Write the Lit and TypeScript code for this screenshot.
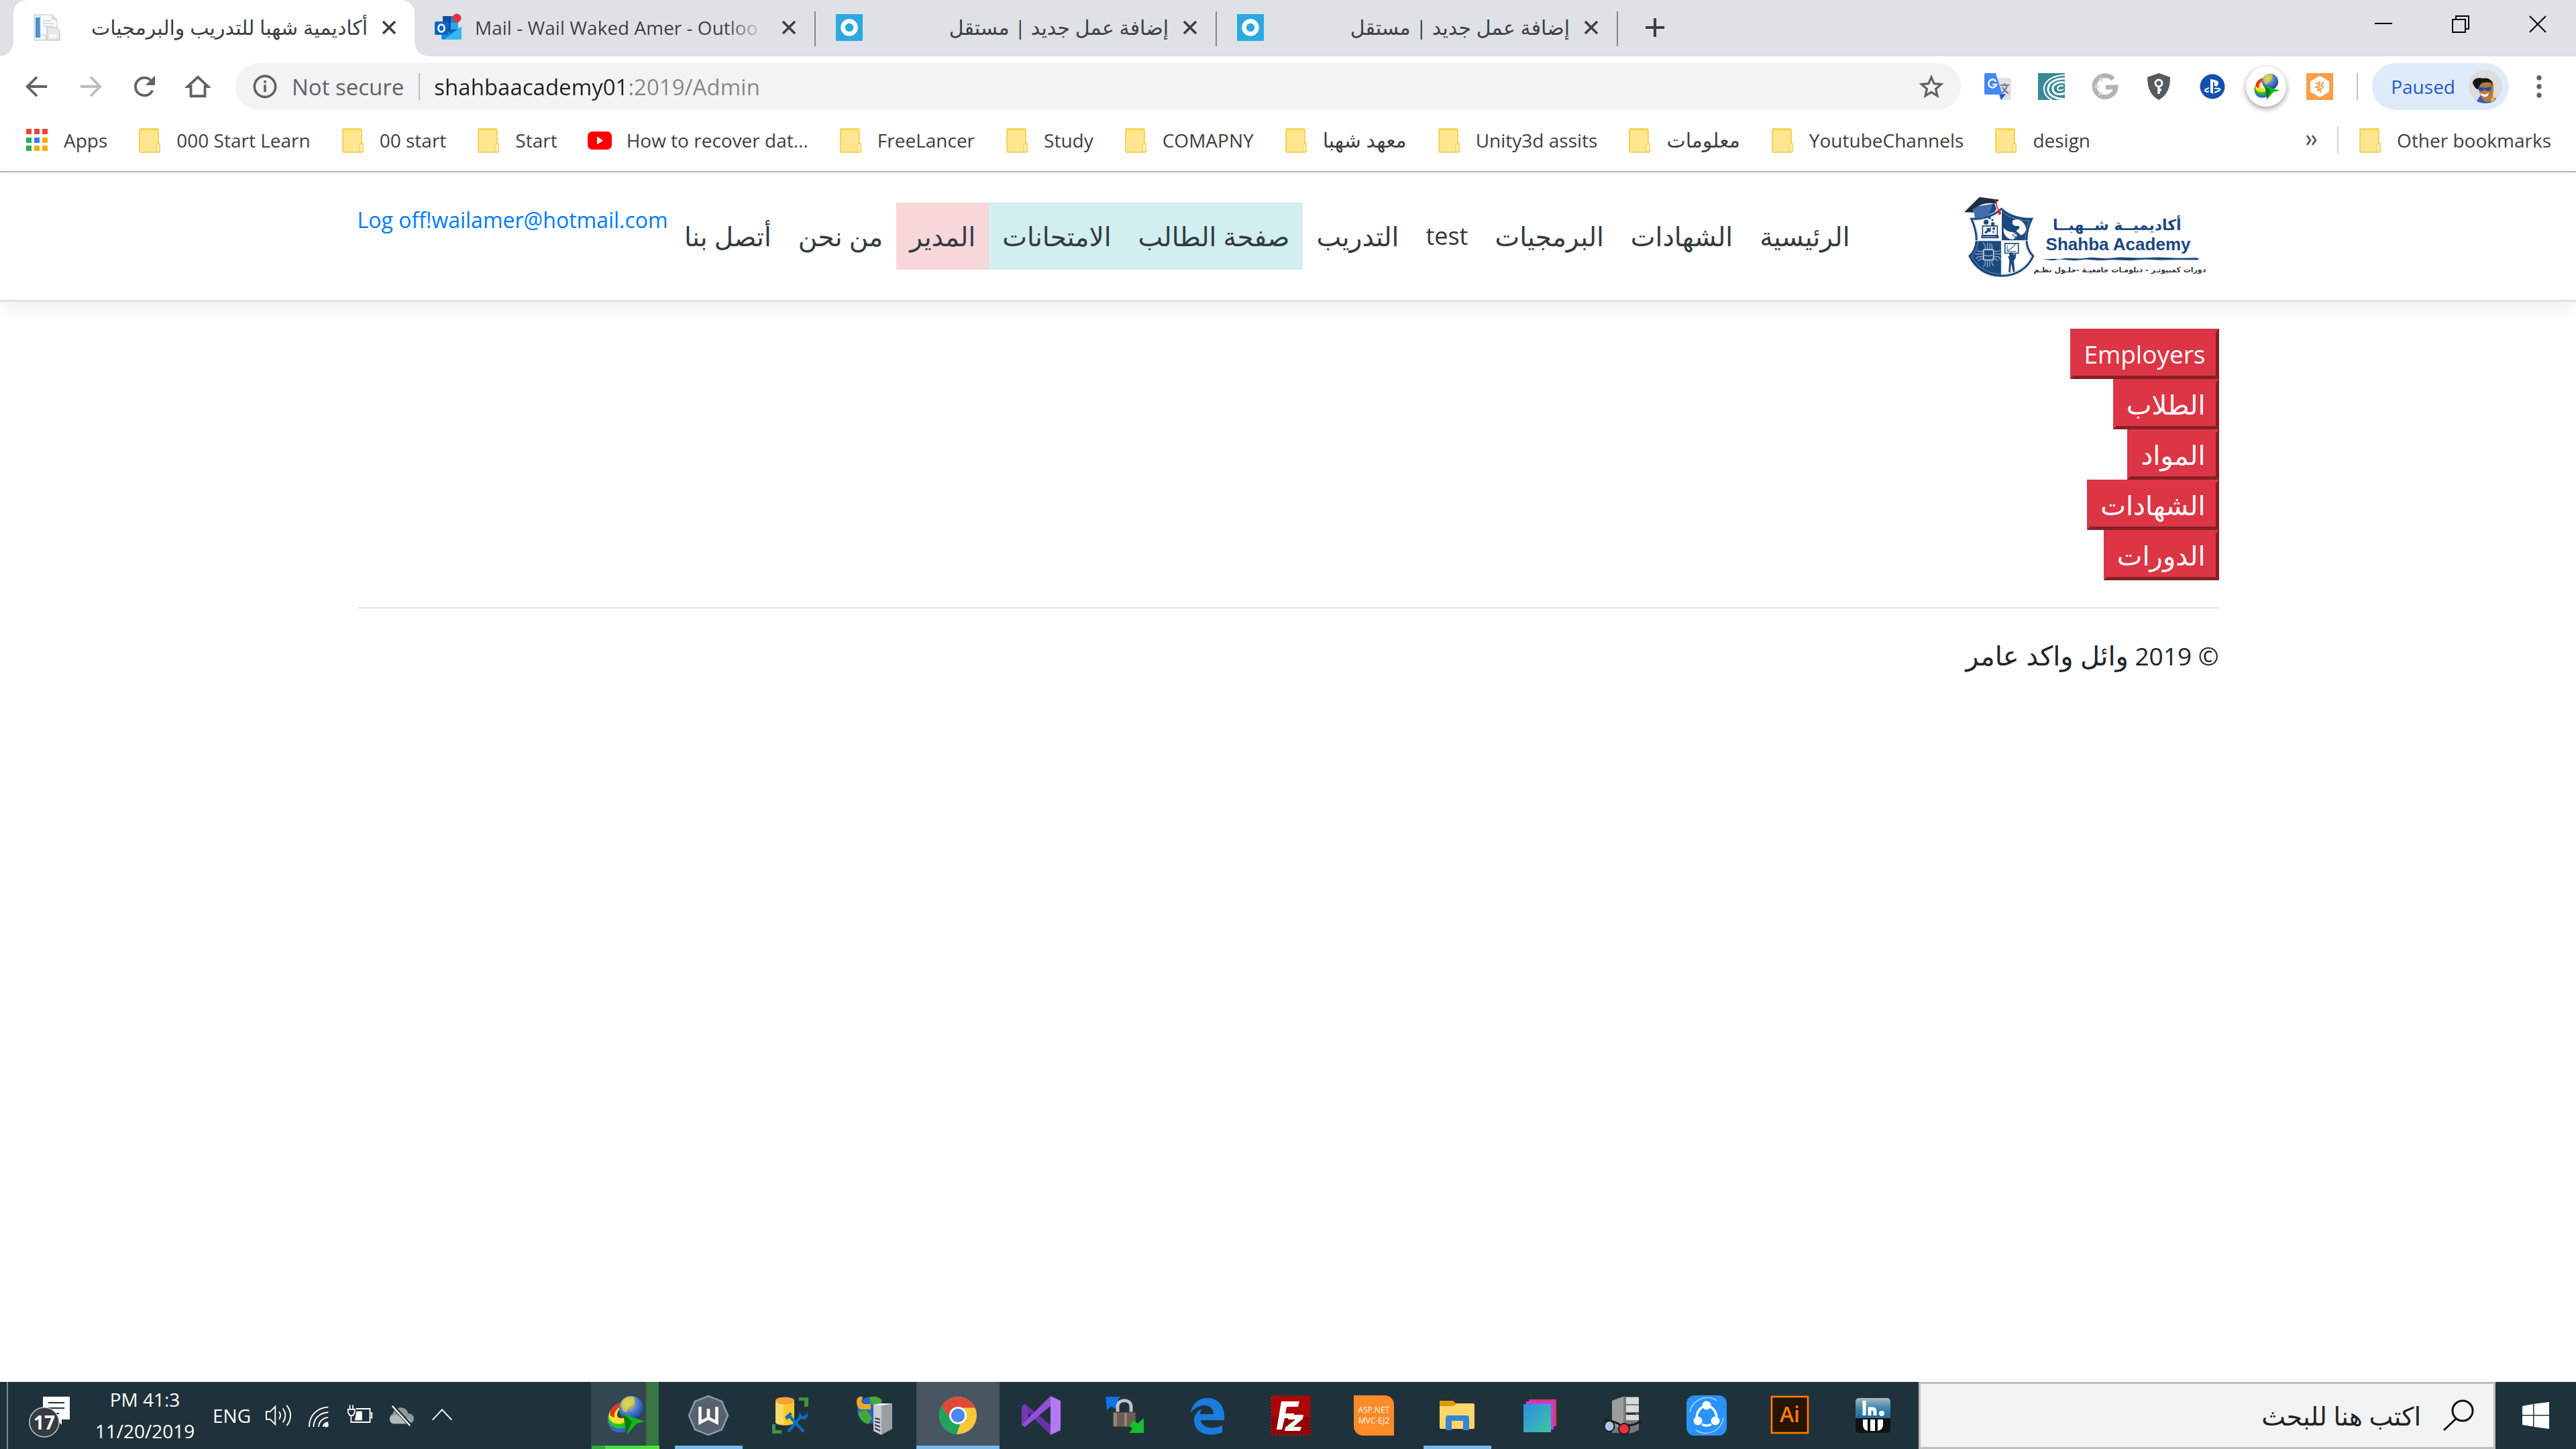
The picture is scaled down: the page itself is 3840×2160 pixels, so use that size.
import { LitElement, html, svg, css } from "lit";
import { customElement, property } from "lit/decorators.js";
import { classMap } from "lit/directives/class-map.js";

/* ---------- icon library ---------- */

const icon = (box: string, body: unknown) =>
  html`<svg class="icon" viewBox=${box} aria-hidden="true">${body}</svg>`;

const idm = (id: string) => svg`
  <defs>
    <radialGradient id=${id} cx=".35" cy=".3" r=".8"><stop offset="0" stop-color="#fff6b0"/><stop offset=".25" stop-color="#b8b858"/><stop offset=".5" stop-color="#4a80dc"/><stop offset="1" stop-color="#16377c"/></radialGradient>
  </defs>
  <path d="M22 14C6 20 0 34 6 46c6 12 24 12 32 2l-8-8c-8 6-16 0-15-8 1-6 4-10 9-12z" fill="#3a62d8"/>
  <path d="M22 13C7 18 1 31 6 41c6 11 23 11 31 1l-7-5c-8 5-15 0-14-6 1-6 4-9 8-12z" fill="#25c41f"/>
  <path d="M22 12C9 16 3 27 7 36c5 9 20 8 27 1l-5-4c-6 3-12 0-11-5 1-5 3-8 6-10z" fill="#f4e22d"/>
  <path d="M22 11C11 14 5 23 8 31l6 2c-1-8 3-13 9-16z" fill="#e2372a"/>
  <circle cx="39" cy="19" r="18" fill="url(#${id})"/>
  <path d="M26 9c5-7 12-8 18-6-2 4 2 6-1 10-4 4-8 2-9 8-1 4-5 5-7 2-2-4-3-9-1-14z" fill="#d8cf4a" opacity=".8"/>
  <path d="M27 28l33 11-13 3-15 17 0-14z" fill="#0fb91a"/>
  <path d="M27 28l5 31 8-20z" fill="#087a12"/>`;

const ICONS: Record<string, unknown> = {
  page: icon("0 0 40 40", svg`
    <rect x="1" y="1" width="18" height="38" fill="#eef2f6" stroke="#b9c2cc"/><rect x="3" y="5" width="7" height="30" fill="#4a90d2"/>
    <path d="M10 1h18l7 7v23H10z" fill="#f7f8f9" stroke="#c6cbd1"/><path d="M28 1v7h7" fill="#dfe3e7" stroke="#c6cbd1"/>
    <path d="M14 10h12M14 14h16M14 18h16" stroke="#d2d6db" stroke-width="1.5"/>
    <path d="M20 20h14l5 5v14H20z" fill="#e6e8ea" stroke="#b4bac1"/><path d="M24 30h10v5H24z" fill="#fff"/>`),
  outlook: icon("0 0 40 40", svg`
    <path d="M12 3h20a3 3 0 0 1 3 3v26H12z" fill="#0a5bb0"/><path d="M12 3h12v10H12z" fill="#0f4c9c"/><path d="M24 13h11v10H24z" fill="#28a8ea"/><path d="M24 3h11v10H24z" fill="#1480d8"/>
    <path d="M10 20l14 8 16-9v16a3 3 0 0 1-3 3H12a2 2 0 0 1-2-2z" fill="#1a86dc"/><path d="M40 19L14 38h23a3 3 0 0 0 3-3z" fill="#35b8f1"/>
    <rect x="0" y="11" width="20" height="20" rx="2" fill="#0f66c2"/><ellipse cx="10" cy="21" rx="4.6" ry="5.4" fill="none" stroke="#fff" stroke-width="2.6"/>
    <circle cx="33" cy="6" r="6.5" fill="#e0323c"/>`),
  ring: icon("0 0 40 40", svg`<path d="M0 0h40v40H0z" fill="#2ca9e1"/><circle cx="20" cy="20" r="9.5" fill="none" stroke="#fff" stroke-width="6.5"/>`),
  close: icon("0 0 24 24", svg`<path d="M3 3l18 18M21 3L3 21" stroke="#3c4043" stroke-width="3.6" fill="none"/>`),
  plus: icon("0 0 32 32", svg`<path d="M16 1v30M1 16h30" stroke="#3c4043" stroke-width="4.4"/>`),
  minimize: icon("0 0 26 26", svg`<path d="M0 12h26" stroke="#000" stroke-width="2"/>`),
  restore: icon("0 0 26 26", svg`<path d="M1 6h19v19H1zM6 6V1h19v19h-5" stroke="#000" stroke-width="2" fill="none"/>`),
  quit: icon("0 0 26 26", svg`<path d="M1 1l24 24M25 1L1 25" stroke="#000" stroke-width="2"/>`),
  back: icon("0 0 40 40", svg`<path d="M36 20H6M20 5L5 20l15 15" stroke="#5f6368" stroke-width="4" fill="none"/>`),
  forward: icon("0 0 40 40", svg`<path d="M4 20h30M20 5l15 15-15 15" stroke="#babcbe" stroke-width="4" fill="none"/>`),
  reload: icon("0 0 40 40", svg`<path d="M33 26a14 14 0 1 1-3-16" stroke="#5f6368" stroke-width="4" fill="none"/><path d="M37 3v15H22z" fill="#5f6368"/>`),
  home: icon("0 0 40 40", svg`<path d="M4 20L20 5l16 15h-5v15H9V20z" stroke="#5f6368" stroke-width="4" fill="none"/>`),
  info: icon("0 0 34 34", svg`<circle cx="17" cy="17" r="14.8" stroke="#5f6368" stroke-width="3.4" fill="none"/><path d="M17 14.5v10M17 8.500v3.500" stroke="#5f6368" stroke-width="3.4"/>`),
  star: icon("0 0 36 36", svg`<path d="M18 4l4.100 9.700 10.500.9-8 6.900 2.400 10.300-9-5.500-9 5.500 2.400-10.300-8-6.900 10.500-.9z" stroke="#5f6368" stroke-width="3.200" fill="none"/>`),
  translate: icon("0 0 40 40", svg`
    <path d="M16 7h22a2 2 0 0 1 2 2v29a2 2 0 0 1-2 2H24z" fill="#dfe1e5"/><path d="M22 31h10l-7 9z" fill="#2c56b4"/>
    <path d="M24 18h13M30.500 15v3M34 18c-1 6-5 10-9 12M27 21c2 4 5 7 9 9" stroke="#6b7480" stroke-width="2" fill="none"/>
    <path d="M2 0h15l10 32H2a2 2 0 0 1-2-2V2a2 2 0 0 1 2-2z" fill="#4688f1"/>
    <path d="M17.500 12.500a6 6 0 1 0 .6 4.500h-5.600" stroke="#fff" stroke-width="2.400" fill="none"/>`),
  swirl: icon("0 0 40 40", svg`
    <path d="M0 0h40v40H0z" fill="#38899b"/>
    <path d="M40 3C22 3 9 12 9 23c0 8 5 14 12 17" stroke="#fff" stroke-width="2" fill="none"/>
    <path d="M40 8C26 8 15 14 15 24c0 8 8 14 25 15" stroke="#fff" stroke-width="3" fill="none"/>
    <path d="M40 14c-10-2-19 3-18 10 1 8 11 9 18 6" stroke="#fff" stroke-width="3" fill="none"/>
    <path d="M38 19c-6-1-9 1-9 4 1 4 6 3 9 1" stroke="#fff" stroke-width="2" fill="none"/>`),
  google: icon("0 0 40 40", svg`<path d="M32 9a16 16 0 1 0 4 12H21" stroke="#b4b4b4" stroke-width="7" fill="none"/><path d="M12 7l4 6M4 20h7M11 33l4-5" stroke="#d8d8d8" stroke-width="3"/>`),
  shield: icon("0 0 40 40", svg`<path d="M20 0l17 6c0 17-5 27-17 34C8 33 3 23 3 6z" fill="#555a5e"/><circle cx="20" cy="15" r="5" stroke="#fff" stroke-width="3" fill="none"/><path d="M20 20v11M20 25h4" stroke="#fff" stroke-width="3.500"/>`),
  ps: icon("0 0 40 40", svg`<circle cx="20" cy="20" r="18.500" fill="#1250b0"/><path d="M17 9v20l4 2V13c2 0 2 2 2 6 4 2 6-1 6-4 0-4-5-5-12-6z" fill="#fff"/><path d="M15 22c-5 2-9 4-3 6l3-1M23 23c8-1 10 1 7 3l-7 3" stroke="#fff" stroke-width="2" fill="none"/>`),
  idmsmall: icon("0 0 60 60", idm("globe-a")),
  honey: icon("0 0 40 40", svg`<path d="M0 0h40v40H0z" fill="#fb9e46"/><path d="M20 4l14 8v16l-14 8-14-8V12z" fill="#fff"/><path d="M14 14l5 3 1-5M26 13l-4 5 4 3M13 21l6-1-2 7M24 22l-4 3 2 4" stroke="#f6a24f" stroke-width="2.400" fill="none"/>`),
  avatar: icon("0 0 50 50", svg`
    <circle cx="25" cy="25" r="25" fill="#dcdcdc"/>
    <path d="M12 47l5-8h16l8 4-3 4c-8 4-18 4-26 0z" fill="#2e60c0"/><path d="M32 38l5 0 2 8-6 2z" fill="#f2bd28"/>
    <path d="M15 18c2-3 18-4 21 0 2 9 2 28-8 30-9 0-14-16-13-30z" fill="#b6793c"/><path d="M17 34c5 4 10 3 13 0 0 7-9 10-13 0z" fill="#fff"/>
    <path d="M6 20c0-7 8-9 16-7 7-2 15 3 13 11l-2-5c-6-1-11-1-15 2l-4 8c-2 1-6-4-8-9z" fill="#15161a"/>
    <path d="M14 26h7l4 1 9-2-1 6-6 1-3-3-4 3-5-1z" fill="#2848b4"/>`),
  dots: icon("0 0 8 34", svg`<circle cx="4" cy="4" r="3.700" fill="#5f6368"/><circle cx="4" cy="17" r="3.700" fill="#5f6368"/><circle cx="4" cy="30" r="3.700" fill="#5f6368"/>`),
  apps: icon("0 0 40 40", svg`
    <path d="M4 3h8v8H4zM16 3h8v8h-8zM28 3h8v8h-8z" fill="#ea4335"/><path d="M4 16h8v8H4zM4 28h8v8H4z" fill="#34a853"/>
    <path d="M16 16h8v8h-8z" fill="#2a84f0"/><path d="M28 16h8v8h-8zM16 28h8v8h-8zM28 28h8v8h-8z" fill="#f9ab00"/>`),
  folder: icon("0 0 40 40", svg`<path d="M6 3h25a2 2 0 0 1 2 2v20h2v12a1 1 0 0 1-1 1H6a1 1 0 0 1-1-1V4z" fill="#ffe68f" stroke="#f2cb4c" stroke-width="1.600"/><path d="M6 3h26v2H6z" fill="#fbd342"/><path d="M30 37V27l3-2h2v12z" fill="#fff0b8" stroke="#f2cb4c"/>`),
  youtube: icon("0 0 40 40", svg`<rect x="2" y="7" width="36" height="27" rx="7" fill="#f00"/><path d="M16 14.500v12l9-6z" fill="#fff"/>`),
  more: icon("0 0 20 20", svg`<path d="M3 3l5 7-5 7M11 3l5 7-5 7" stroke="#4a4e52" stroke-width="2.600" fill="none"/>`),

  notify: icon("0 0 64 64", svg`
    <path d="M22 4h40v34H50v8l-8-8H22z" fill="#fff"/><path d="M30 13h24M30 21h24M30 29h16" stroke="#1f323b" stroke-width="2"/>
    <circle cx="24" cy="42" r="22" fill="#353b42" stroke="#c8cccf" stroke-width="1.500"/>`),
  speaker: icon("0 0 42 40", svg`<path d="M2 14h6l8-8v28l-8-8H2zM22 14c3 4 3 8 0 12M28 9c5 7 5 15 0 22M34 4c8 10 8 22 0 32" stroke="#fff" stroke-width="2" fill="none"/>`),
  wifi: icon("0 0 36 40", svg`<path d="M2 38C2 20 14 8 32 7M9 38c0-13 9-22 23-23M17 38c0-8 6-14 15-15M24 38c0-4 3-7 8-7" stroke="#fff" stroke-width="2" fill="none"/><circle cx="29" cy="35" r="3.500" fill="#fff"/>`),
  battery: icon("0 0 44 40", svg`<path d="M15 9h23v22H14M38 16h3v8h-3" stroke="#fff" stroke-width="2" fill="none"/><path d="M16 13h9v15H13z" fill="#fff"/><path d="M5 3v7M10 3v7M2 10h11v5l-3 5H5l-3-5zM7 20v11h7" stroke="#fff" stroke-width="2" fill="#1f323b"/>`),
  cloud: icon("0 0 42 40", svg`<path d="M8 33a9 9 0 0 1 0-16c2-12 22-13 24 0a8 8 0 0 1 2 16z" fill="#8d979d"/><path d="M4 22c8-5 14-3 18 2 5-2 10 0 14 3a8 8 0 0 1-4 6H8a8 8 0 0 1-4-11z" fill="#b4babd"/><path d="M8 5l28 31" stroke="#1f323b" stroke-width="6"/><path d="M7 5l28 31" stroke="#fff" stroke-width="2.400"/>`),
  chevron: icon("0 0 36 40", svg`<path d="M3 27l15-16 15 16" stroke="#fff" stroke-width="2" fill="none"/>`),

  idm: icon("0 0 60 60", idm("globe-b")),
  warp: icon("0 0 60 60", svg`<path d="M30 1l20 8 9 21-9 21-20 8-20-8L1 30l9-21z" fill="#57626d" stroke="#8aa0bb" stroke-width="2.400"/><path d="M17.500 17v23.500L30 34l12.500 6.500V17M30 20v16" stroke="#fff" stroke-width="4.600" fill="none"/>`),
  dbtools: icon("0 0 60 60", svg`
    <path d="M6 8h28v33c-4 5-24 5-28 0z" fill="#fbc927"/><path d="M6 8h12v35c-6 0-11-1-12-3z" fill="#fbda6c"/><ellipse cx="20" cy="8" rx="14" ry="5.500" fill="#f2a33c"/>
    <path d="M41 3h14v14h-6V8h-8zM1 43v14h14v-5H6v-9z" fill="#3f9542"/>
    <path d="M25 54l20-24M48 54L25 29" stroke="#0e6cc0" stroke-width="4.600"/><path d="M20 32l8-7 3 3-8 9zM42 25l4 6 6-2 2-4c2 7-3 13-9 10l-4-4z" fill="#0e6cc0"/>`),
  globeserver: icon("0 0 60 60", svg`
    <circle cx="24" cy="22" r="20" fill="#2064c8"/><path d="M22 3c8-3 16 0 19 5l-8 8-9-3zM6 24l12-2 8 12-6 9C10 40 5 32 6 24z" fill="#45a83a"/>
    <path d="M3 9c0-6 6-9 9-6l-2 7 4 3h10v8H8c-4-3-5-8-5-12z" fill="#f5a623"/>
    <path d="M28 14l12-2v47l-12-6z" fill="#c9cccf"/><path d="M40 12h16v38l-16 9z" fill="#9b9fa3"/><path d="M28 14l10-2h18l-14 3z" fill="#f3f4f5"/>
    <path d="M30 34l8 2M30 39l8 2M30 44l8 3M30 49l8 4" stroke="#34383c" stroke-width="2"/>`),
  chrome: icon("0 0 60 60", svg`
    <circle cx="30" cy="30" r="28" fill="#f9c73a"/>
    <path d="M30 2a28 28 0 0 1 25.600 16.500H30L18.500 36.500 5.800 16A28 28 0 0 1 30 2z" fill="#e0493a"/>
    <path d="M5.800 16l13.400 20.800L33 43.500 28 58A28 28 0 0 1 5.800 16z" fill="#1fa45c"/>
    <circle cx="30" cy="30" r="13" fill="#fff"/><circle cx="30" cy="30" r="10.200" fill="#4a86f0"/>`),
  vs: icon("0 0 60 60", svg`
    <path d="M1 16l5-3 38 31v15L2 17z" fill="#6a32a8"/><path d="M1 16v28l5 3 5-5V19l-5-6z" fill="#7438b4"/><path d="M44 1v15L6 47l-5-3z" fill="#9250d8"/>
    <path d="M44 1l15 7v44l-15 7z" fill="#b27af0"/>`),
  lock: icon("0 0 60 60", svg`
    <path d="M2 2h22l-4 6 3 5-7 7-5-4-7 6z" fill="#0c74ee"/><path d="M20 28V16c1-11 19-11 20 0v12" stroke="#bfc2c4" stroke-width="5" fill="none"/>
    <rect x="13" y="25" width="34" height="22" rx="1" fill="#6b5f54" stroke="#3c3833"/><path d="M14 26h5v20h-5zM30 26h4v20h-4z" fill="#91867a"/>
    <path d="M59 34v22H37l5-6-4-5 6-8 6 5z" fill="#18bf2a"/>`),
  edge: icon("0 0 60 60", svg`<path d="M5 26C7 11 18 4 30 4c16 0 25 11 25 28v5H20c1 11 17 15 32 8v10c-20 9-42 1-42-18 0-8 5-14 12-17-2 2-3 5-3 8h20c0-16-22-18-34-2z" fill="#1a7cdc"/>`),
  filezilla: icon("0 0 60 60", svg`
    <path d="M2 2h56v56H2z" fill="#ae0606" stroke="#ae0606" stroke-width="4" stroke-dasharray="3 2"/><path d="M2 32h56v26H2z" fill="#920404"/>
    <path d="M9 51l7-42h27l-2 8H24l-2 10h13l-1 7H21l-4 17z" fill="#fff"/><path d="M27 29h22l-1 6-14 12h12l-2 6H21l1-5 15-12H26z" fill="#fff"/>`),
  asp: icon("0 0 60 60", svg`<path d="M0 0h46a14 14 0 0 1 14 14v46H14A14 14 0 0 1 0 46z" fill="#ff8a28"/><text x="30" y="26" text-anchor="middle" font-size="12" fill="#fff">ASP.NET</text><text x="30" y="42" text-anchor="middle" font-size="12" fill="#fff">MVC-EJ2</text>`),
  explorer: icon("0 0 60 60", svg`<path d="M4 8h20l5 5-4 6H4z" fill="#dd9800"/><path d="M4 16h21l4-4h25a2 2 0 0 1 2 2v34a2 2 0 0 1-2 2H6a2 2 0 0 1-2-2z" fill="#fbd76b"/><path d="M13 52V34a4 4 0 0 1 4-4h27a4 4 0 0 1 4 4v18h-9V38H22v14z" fill="#3486d2"/>`),
  stack: icon("0 0 60 60", svg`
    <defs><linearGradient id="sheet" x1="0" y1="0" x2="1" y2="1"><stop offset="0" stop-color="#2f8ae4"/><stop offset="1" stop-color="#3cc8a0"/></linearGradient></defs>
    <path d="M13 6h41v40H13z" fill="#d83a68"/><path d="M9 9h41v42H9z" fill="#c43ce0"/><path d="M5 13h41v42H5z" fill="url(#sheet)"/>`),
  serverglass: icon("0 0 60 60", svg`
    <path d="M13 8l16-6h24v50l-10 4H13z" fill="#77797b"/><path d="M13 8l17-6v44l-17 2z" fill="#9a9c9e"/>
    <path d="M34 3h19v10H34zM34 15h19v10H34zM34 29h19v8H34z" fill="#d8dadb"/><path d="M34 26h19v3H34z" fill="#2d302d"/><path d="M48 27h4v1h-4z" fill="#4be04a"/>
    <path d="M2 36c10 3 18 3 24 9l8-1c10 2 16-2 22-6" stroke="#1b1b1b" stroke-width="3" fill="none"/>
    <ellipse cx="9" cy="46" rx="7.500" ry="8" fill="#a9c2ec" stroke="#1b1b1b" stroke-width="2"/><ellipse cx="31" cy="50" rx="8" ry="8" fill="#ee3038" stroke="#1b1b1b" stroke-width="2"/>`),
  shareit: icon("0 0 60 60", svg`
    <rect width="60" height="60" rx="12" fill="#2a92fb"/><path d="M5 25C9 5 32-2 45 8M55 33C52 54 30 62 14 52" stroke="#a4d2ff" stroke-width="1.600" fill="none"/>
    <path d="M24 17c-7 5-9 10-9 17M36 17c7 5 9 10 9 17M23 43c5 3 9 3 14 0" stroke="#fff" stroke-width="3.400" fill="none"/>
    <circle cx="30" cy="15" r="6.500" fill="#fff"/><circle cx="17" cy="38" r="6.500" fill="#fff"/><circle cx="43" cy="38" r="6.500" fill="#fff"/>`),
  ai: icon("0 0 60 60", svg`<rect x="3" y="2" width="54" height="54" fill="#261300" stroke="#ff7c00" stroke-width="2.600"/><text x="30" y="40" text-anchor="middle" font-size="32" font-weight="600" fill="#ff7c00">Ai</text>`),
  hwi: icon("0 0 60 60", svg`
    <defs><linearGradient id="sky" x1="0" y1="0" x2="0" y2="1"><stop offset="0" stop-color="#a9bac4"/><stop offset=".5" stop-color="#3f86aa"/><stop offset="1" stop-color="#1e6a98"/></linearGradient></defs>
    <rect x="4" y="4" width="52" height="52" rx="5" fill="#111"/><path d="M4 34V9a5 5 0 0 1 5-5h42a5 5 0 0 1 5 5v25z" fill="url(#sky)"/>
    <path d="M17 8v22M25 30V20h4q4 0 4 4v6" stroke="#fff" stroke-width="5" fill="none"/><circle cx="43" cy="27" r="4" fill="#fff"/>
    <path d="M15 36h7v17q-7-2-7-9zM26 36h7v17h-7zM37 36h8v8q0 7-8 9z" fill="#fff"/>`),
  search: icon("0 0 48 48", svg`<circle cx="30" cy="17" r="15" stroke="#111" stroke-width="3" fill="none"/><path d="M20 29L2 46" stroke="#111" stroke-width="3"/>`),
  windows: icon("0 0 40 40", svg`<path d="M0 6l16-3v16H0zM17.500 2.700L40 0v19H17.500zM0 20.500h16v16L0 34zM17.500 20.500H40V40l-22.500-3z" fill="#fff"/>`),
};

const NAVY = "#1c4880";

const logo = html`<svg class="logo" viewBox="70 55 1100 380" role="img" aria-label="Shahba Academy">
  <defs><clipPath id="crest"><path d="M248 122c-38 34-88 46-134 44 22 50 40 120-8 167 26 54 74 88 142 88s118-34 142-88c-46-46-30-117-6-167-46 2-98-10-136-44z"/></clipPath></defs>
  <g clip-path="url(#crest)">
    <path d="M80 100h170v164H80zM250 264h160v170H250z" fill="#fff"/>
    <path d="M250 100h170v164H250zM80 264h170v170H80z" fill=${NAVY}/>
  </g>
  <path d="M248 122c-38 34-88 46-134 44 22 50 40 120-8 167 26 54 74 88 142 88s118-34 142-88c-46-46-30-117-6-167-46 2-98-10-136-44z" fill="none" stroke=${NAVY} stroke-width="9"/>
  <path d="M248 132c-38 32-80 42-122 42 20 60 30 112-10 160 24 46 66 78 132 78s110-32 132-78c-38-48-28-100-8-160-42 0-86-10-124-42z" fill="none" stroke="#9fb3cf" stroke-width="2"/>
  <path d="M248 126v290M118 264h254" stroke="#fff" stroke-width="3"/>
  <path d="M122 112l94-14-10 44-40 20-36 2z" fill="#416fae"/>
  <path d="M82 136l68-67 88 12-16 17c-34-6-70 2-100 26l4 14z" fill="#1f2e40"/>
  <path d="M190 140c12-8 18-26 16-40l12-2 8 24-10 16z" fill=${NAVY}/>
  <path d="M218 82c12 8 6 30 14 38l6 26" stroke="#e02228" stroke-width="5" fill="none"/><path d="M232 128l10-2 6 18-10 5z" fill="#e02228"/>
  <path d="M164 198h66v42h-66z" fill="none" stroke=${NAVY} stroke-width="5"/><path d="M158 240h78v13h-78z" fill=${NAVY}/><path d="M164 246h60" stroke="#fff" stroke-width="2"/>
  <circle cx="180" cy="181" r="11" fill=${NAVY}/><circle cx="195" cy="162" r="6" fill=${NAVY}/><circle cx="208" cy="171" r="5" fill=${NAVY}/><circle cx="210" cy="189" r="8" fill=${NAVY}/><circle cx="214" cy="210" r="6" fill=${NAVY}/><circle cx="212" cy="225" r="4" fill=${NAVY}/>
  <path d="M172 226l14-12-8-4 24-4-3 22-6-6-14 11z" fill=${NAVY}/>
  <path d="M300 172c30-10 56 12 58 40-2 14-10 24-24 28l-20-20c16-10 22-20 6-22-18 2-28-12-20-26z" fill="#fff"/>
  <path d="M258 206c-4 34 20 54 44 52l20-18-12-12c-22-2-42-8-52-22z" fill="#fff"/><path d="M296 236l22 18M304 228l22 18M312 222l20 16" stroke=${NAVY} stroke-width="4"/>
  <rect x="168" y="304" width="45" height="46" rx="5" fill="none" stroke="#cdd8e6" stroke-width="5"/><path d="M172 328q18 8 36 0" stroke="#cdd8e6" stroke-width="3" fill="none"/>
  <path d="M176 302v-18l-10-12M186 302v-30M196 302v-28M206 302v-16l-4-8M176 352v20l-10 8M186 352v30M196 352v28M206 352v14l8 12M166 312h-20l-8-4M166 324h-34M166 336h-20l-12 8M166 346h-10l-12 8M216 312h16l10-6M216 324h30M216 336h20l8 12M216 346h8l8 8" stroke="#b6c6da" stroke-width="3" fill="none"/>
  <path d="M264 276h60v44h-60z" fill="none" stroke=${NAVY} stroke-width="5"/><path d="M274 284v28h40M278 308l14-10 6-4 12-14" stroke=${NAVY} stroke-width="3" fill="none"/>
  <circle cx="292" cy="325" r="9" fill=${NAVY}/><path d="M278 334l36-12-2 20-8 10 4 50-8 2-8-40-4 42-8-2 4-52z" fill=${NAVY}/>
  <path d="M430 347l60-2 10 3 40-6 60 2 50-5 70 4 60-5 90 3 80-3 90 4 80-2 14 6-10 4-90-1-80 2-60-3-70 4-80-3-60 3-60-4-50 5-60-5-40 4z" fill=${NAVY}/>
  <text class="logo-ar" x="765" y="218" text-anchor="middle" direction="rtl">أكاديميــة شــهبــا</text>
  <text class="logo-en" x="770" y="306" text-anchor="middle">Shahba Academy</text>
  <text class="logo-sub" x="777" y="405" text-anchor="middle" direction="rtl">دورات كمبيوتـر - دبلومـات جامعيـة -حلـول نظـم</text>
</svg>`;

const iconStyles = css`
  .icon { display: block; flex: none; overflow: visible; }
  button { font: inherit; color: inherit; background: none; border: 0; padding: 0; margin: 0; display: flex; align-items: center; justify-content: center; }
  a { color: inherit; text-decoration: none; }
  :host, * { box-sizing: border-box; }
`;

/* ---------- browser chrome ---------- */

interface Tab { icon: string; title: string; rtl: boolean; active?: boolean; }

@customElement("browser-tabs")
class BrowserTabs extends LitElement {
  @property({ attribute: false }) tabs: Tab[] = [];

  static styles = [iconStyles, css`
    :host { display: flex; height: 84px; background: #dee1e6; padding-left: 20px; font-size: 28px; color: #3c4043; }
    .tab { position: relative; display: flex; align-items: center; flex: 0 1 598px; min-width: 0; padding: 0 26px 2px 30px; }
    .tab.active { background: #fff; border-radius: 20px 20px 0 0; }
    .tab.active::before, .tab.active::after { content: ""; position: absolute; bottom: 0; width: 20px; height: 20px; }
    .tab.active::before { left: -20px; background: radial-gradient(circle at 0 0, transparent 19px, #fff 20px); }
    .tab.active::after { right: -20px; background: radial-gradient(circle at 100% 0, transparent 19px, #fff 20px); }
    .tab.divided { border-right: 2px solid; border-image: linear-gradient(#dee1e6 18px, #84888d 18px, #84888d 68px, #dee1e6 68px) 1; }
    .pick { flex: 1; min-width: 0; gap: 20px; justify-content: flex-start; }
    .pick .icon { width: 40px; height: 40px; }
    .title { flex: 1; min-width: 0; white-space: nowrap; text-align: start; line-height: 44px; }
    .title.rtl { font-size: 30px; }
    .title.fade { mask-image: linear-gradient(90deg, #000 86%, transparent 99%); }
    .shut { width: 24px; height: 24px; margin-left: 20px; }
    .shut .icon { width: 24px; height: 24px; }
    .new { width: 110px; padding-bottom: 2px; }
    .new .icon { width: 30px; height: 30px; }
    .controls { margin-left: auto; display: flex; }
    .controls button { width: 115px; height: 72px; }
    .controls .icon { width: 26px; height: 26px; }
  `];

  render() {
    return html`
      ${this.tabs.map(t => html`
        <div class=${classMap({ tab: true, active: !!t.active, divided: !t.active })}>
          <button class="pick">${ICONS[t.icon]}<span class=${classMap({ title: true, rtl: t.rtl, fade: !t.rtl })} dir=${t.rtl ? "rtl" : "ltr"}>${t.title}</span></button>
          <button class="shut" aria-label="Close">${ICONS.close}</button>
        </div>`)}
      <button class="new" aria-label="New tab">${ICONS.plus}</button>
      <div class="controls">
        <button aria-label="Minimize">${ICONS.minimize}</button>
        <button aria-label="Restore">${ICONS.restore}</button>
        <button aria-label="Close window">${ICONS.quit}</button>
      </div>`;
  }
}

@customElement("browser-toolbar")
class BrowserToolbar extends LitElement {
  static styles = [iconStyles, css`
    :host { display: flex; align-items: center; height: 90px; background: #fff; padding: 0 25px 0 15px; font-size: 33px; }
    .nav { width: 80px; height: 70px; }
    .nav .icon { width: 38px; height: 38px; }
    .omnibox { flex: 1; height: 70px; border-radius: 35px; background: #f1f3f4; display: flex; align-items: center; margin: 0 35px 0 16px; padding: 0 26px; }
    .omnibox .icon { width: 36px; height: 36px; }
    .secure { color: #5f6368; margin: 0 21px 0 22px; display: flex; gap: 22px; align-items: center; }
    .bar { width: 2px; height: 40px; background: #bdc1c6; }
    .url { flex: 1; font: inherit; color: #202124; border: 0; outline: 0; padding: 0; height: 60px; -webkit-text-fill-color: transparent; background: linear-gradient(90deg, #202124 286px, #80868b 286px) text; }
    .ext { display: flex; align-items: center; gap: 40px; }
    .ext button { width: 40px; height: 40px; }
    .ext .icon { width: 40px; height: 40px; }
    .ext .round { width: 60px; height: 60px; margin: 0 -10px; border-radius: 50%; background: #fff; box-shadow: 0 3px 8px rgba(0, 0, 0, .4); }
    .edge { margin: 0 21px 0 35px; }
    .profile { height: 70px; border-radius: 35px; background: #e0ebfa; color: #1a5cc8; font-size: 28px; padding: 0 10px 0 28px; gap: 20px; }
    .profile .icon { width: 50px; height: 50px; }
    .menu { width: 60px; margin-left: 15px; height: 60px; }
    .menu .icon { width: 8px; height: 34px; }
  `];

  render() {
    const ext = ["translate", "swirl", "google", "shield", "ps", "idmsmall", "honey"];
    return html`
      ${["back", "forward", "reload", "home"].map(n => html`<button class="nav" aria-label=${n}>${ICONS[n]}</button>`)}
      <div class="omnibox">
        ${ICONS.info}<span class="secure">Not secure<span class="bar"></span></span>
        <input class="url" aria-label="Address" value="shahbaacademy01:2019/Admin" spellcheck="false">
        <button aria-label="Bookmark">${ICONS.star}</button>
      </div>
      <div class="ext">${ext.map(n => html`<button class=${n === "idmsmall" ? "round" : ""} aria-label=${n}>${ICONS[n]}</button>`)}</div>
      <span class="bar edge"></span>
      <button class="profile">Paused ${ICONS.avatar}</button>
      <button class="menu" aria-label="Menu">${ICONS.dots}</button>`;
  }
}

@customElement("bookmark-bar")
class BookmarkBar extends LitElement {
  static styles = [iconStyles, css`
    :host { display: flex; align-items: center; height: 83px; padding: 0 37px 12px 35px; background: #fff; border-bottom: 2px solid #b6b6b6; font-size: 28px; color: #3c4043; gap: 43px; white-space: nowrap; }
    a { display: flex; align-items: center; gap: 20px; line-height: 44px; }
    .ar { font-size: 30px; }
    .icon { width: 40px; height: 40px; }
    .over { margin-left: auto; margin-right: -15px; }
    .over .icon { width: 20px; height: 20px; }
    .bar { width: 2px; height: 40px; background: #cfd2d6; margin-right: -16px; }
  `];

  render() {
    const marks: [string, string][] = [
      ["apps", "Apps"], ["folder", "000 Start Learn"], ["folder", "00 start"], ["folder", "Start"], ["youtube", "How to recover dat..."],
      ["folder", "FreeLancer"], ["folder", "Study"], ["folder", "COMAPNY"], ["folder", "معهد شهبا"], ["folder", "Unity3d assits"],
      ["folder", "معلومات"], ["folder", "YoutubeChannels"], ["folder", "design"],
    ];
    return html`
      ${marks.map(([i, t]) => html`<a href="#" class=${/[؀-ۿ]/.test(t) ? "ar" : ""}>${ICONS[i]}<span>${t}</span></a>`)}
      <button class="over" aria-label="More bookmarks">${ICONS.more}</button>
      <span class="bar"></span>
      <a href="#">${ICONS.folder}<span>Other bookmarks</span></a>`;
  }
}

/* ---------- site ---------- */

@customElement("academy-site")
class AcademySite extends LitElement {
  static styles = [iconStyles, css`
    :host { display: block; background: #fefefe; color: #212529; font-size: 37px; line-height: 60px; }
    .container { max-width: 2775px; margin: 0 auto; }
    header { background: #fefefe; border-bottom: 3px solid #dee2e6; box-shadow: 0 8px 22px rgba(0, 0, 0, .06); }
    header .container { display: flex; align-items: center; min-height: 190px; }
    .logo { width: 367px; height: 127px; margin-inline: 17px 146px; flex: none; }
    .logo-en { font: 700 78px "Liberation Sans", sans-serif; fill: #1c4880; }
    .logo-ar { font: 700 66px "DejaVu Sans", sans-serif; fill: #1c4880; }
    .logo-sub { font: 700 33px "DejaVu Sans", sans-serif; fill: #33373c; }
    .ar { font-size: 40px; }
    nav { display: flex; flex: 1; }
    nav a { padding: 20px; white-space: nowrap; color: #343a40; font-size: 36px; }
    nav .ar { font-size: 39px; }
    .info { background: #d1eef0; }
    .danger { background: #f8d7da; }
    .login { align-self: flex-start; margin-top: 45px; line-height: 52px; font-size: 32px; color: #007bff; }
    .menu { display: flex; flex-direction: column; align-items: flex-start; padding: 40px 0; }
    .menu button { height: 75px; padding: 0 15px; border: 5px solid; border-color: #dc3545 #862024 #862024 #dc3545; background: #dc3545; color: #fff; }
    footer { border-top: 2px solid #e4e4e4; padding-top: 40px; }
    p { margin: 0; }
  `];

  render() {
    const links: [string, string][] = [
      ["الرئيسية", "ar"], ["الشهادات", "ar"], ["البرمجيات", "ar"], ["test", ""], ["التدريب", "ar"],
      ["صفحة الطالب", "ar info"], ["الامتحانات", "ar info"], ["المدير", "ar danger"], ["من نحن", "ar"], ["أتصل بنا", "ar"],
    ];
    return html`
      <header dir="rtl">
        <div class="container">
          ${logo}
          <nav>${links.map(([t, c]) => html`<a href="#" class=${c}>${t}</a>`)}</nav>
          <a class="login" href="#" dir="ltr">Log off!wailamer@hotmail.com</a>
        </div>
      </header>
      <main class="container" dir="rtl">
        <div class="menu">
          <button>Employers</button>
          ${["الطلاب", "المواد", "الشهادات", "الدورات"].map(t => html`<button class="ar">${t}</button>`)}
        </div>
        <footer><p>© 2019 <span class="ar">وائل واكد عامر</span></p></footer>
      </main>`;
  }
}

/* ---------- desktop taskbar ---------- */

@customElement("task-bar")
class TaskBar extends LitElement {
  static styles = [iconStyles, css`
    :host { display: flex; height: 100px; background: #1f323b; color: #fff; font-size: 28px; }
    .edge { width: 2px; margin-left: 10px; background: #7c8890; }
    .notify { position: relative; width: 64px; margin-left: 30px; }
    .notify .icon { width: 64px; height: 64px; }
    .count { position: absolute; left: 5px; top: 44px; width: 38px; font-size: 28px; font-weight: 700; line-height: 32px; text-align: center; }
    .clock { width: 180px; margin-left: 20px; display: flex; flex-direction: column; line-height: 47px; padding-top: 3px; text-align: center; }
    .tray { display: flex; align-items: center; gap: 21px; margin-left: 11px; }
    .tray .icon { width: 40px; height: 38px; }
    .apps { display: flex; margin-left: auto; margin-right: 6px; }
    .app { position: relative; width: 124px; height: 100px; }
    .app .icon { width: 60px; height: 60px; }
    .app.open::after { content: ""; position: absolute; bottom: 0; left: 12px; right: 11px; height: 5px; background: #76b9ed; }
    .app.active { background: #485662; }
    .app.active::after { left: 0; right: 0; }
    .app.loading { background: linear-gradient(90deg, transparent 11px, #344650 11px, #344650 93px, #397540 93px, #397540 112px, transparent 112px); }
    .app.loading::after { background: linear-gradient(90deg, #2dad32 20px, #48e03a 20px); }
    .find { flex: none; width: 860px; border: 3px solid #bdbdbd; background: #f2f3f5; display: flex; align-items: center; padding: 0 28px; gap: 32px; }
    .find .icon { width: 48px; height: 48px; }
    .find input { flex: 1; min-width: 0; border: 0; outline: 0; background: none; font: inherit; font-size: 38px; color: #222; padding: 0; }
    .find input::placeholder { color: #222; opacity: 1; }
    .start { width: 120px; }
    .start .icon { width: 40px; height: 40px; }
  `];

  render() {
    const apps: [string, string][] = [
      ["idm", "open loading"], ["warp", "open"], ["dbtools", ""], ["globeserver", ""], ["chrome", "open active"], ["vs", ""], ["lock", ""], ["edge", ""],
      ["filezilla", ""], ["asp", ""], ["explorer", "open"], ["stack", ""], ["serverglass", ""], ["shareit", ""], ["ai", ""], ["hwi", ""],
    ];
    return html`
      <span class="edge"></span>
      <button class="notify" aria-label="Notifications">${ICONS.notify}<span class="count">17</span></button>
      <div class="clock"><span>PM 41:3</span><span>11/20/2019</span></div>
      <div class="tray"><span>ENG</span>${["speaker", "wifi", "battery", "cloud", "chevron"].map(n => ICONS[n])}</div>
      <div class="apps">${apps.map(([n, c]) => html`<button class="app ${c}" aria-label=${n}>${ICONS[n]}</button>`)}</div>
      <label class="find" dir="rtl">${ICONS.search}<input type="search" placeholder="اكتب هنا للبحث" aria-label="اكتب هنا للبحث"></label>
      <button class="start" aria-label="Start">${ICONS.windows}</button>`;
  }
}

@customElement("app-root")
class AppRoot extends LitElement {
  static styles = css`
    :host { display: flex; flex-direction: column; min-height: 100vh; background: #fff; font-family: "Open Sans", "Noto Sans", "DejaVu Sans", sans-serif; }
    academy-site { flex: 1; }
  `;

  private tabs: Tab[] = [
    { icon: "page", title: "أكاديمية شهبا للتدريب والبرمجيات", rtl: true, active: true },
    { icon: "outlook", title: "Mail - Wail Waked Amer - Outloo", rtl: false },
    { icon: "ring", title: "إضافة عمل جديد | مستقل", rtl: true },
    { icon: "ring", title: "إضافة عمل جديد | مستقل", rtl: true },
  ];

  render() {
    return html`
      <browser-tabs .tabs=${this.tabs}></browser-tabs>
      <browser-toolbar></browser-toolbar>
      <bookmark-bar></bookmark-bar>
      <academy-site></academy-site>
      <task-bar></task-bar>`;
  }
}
